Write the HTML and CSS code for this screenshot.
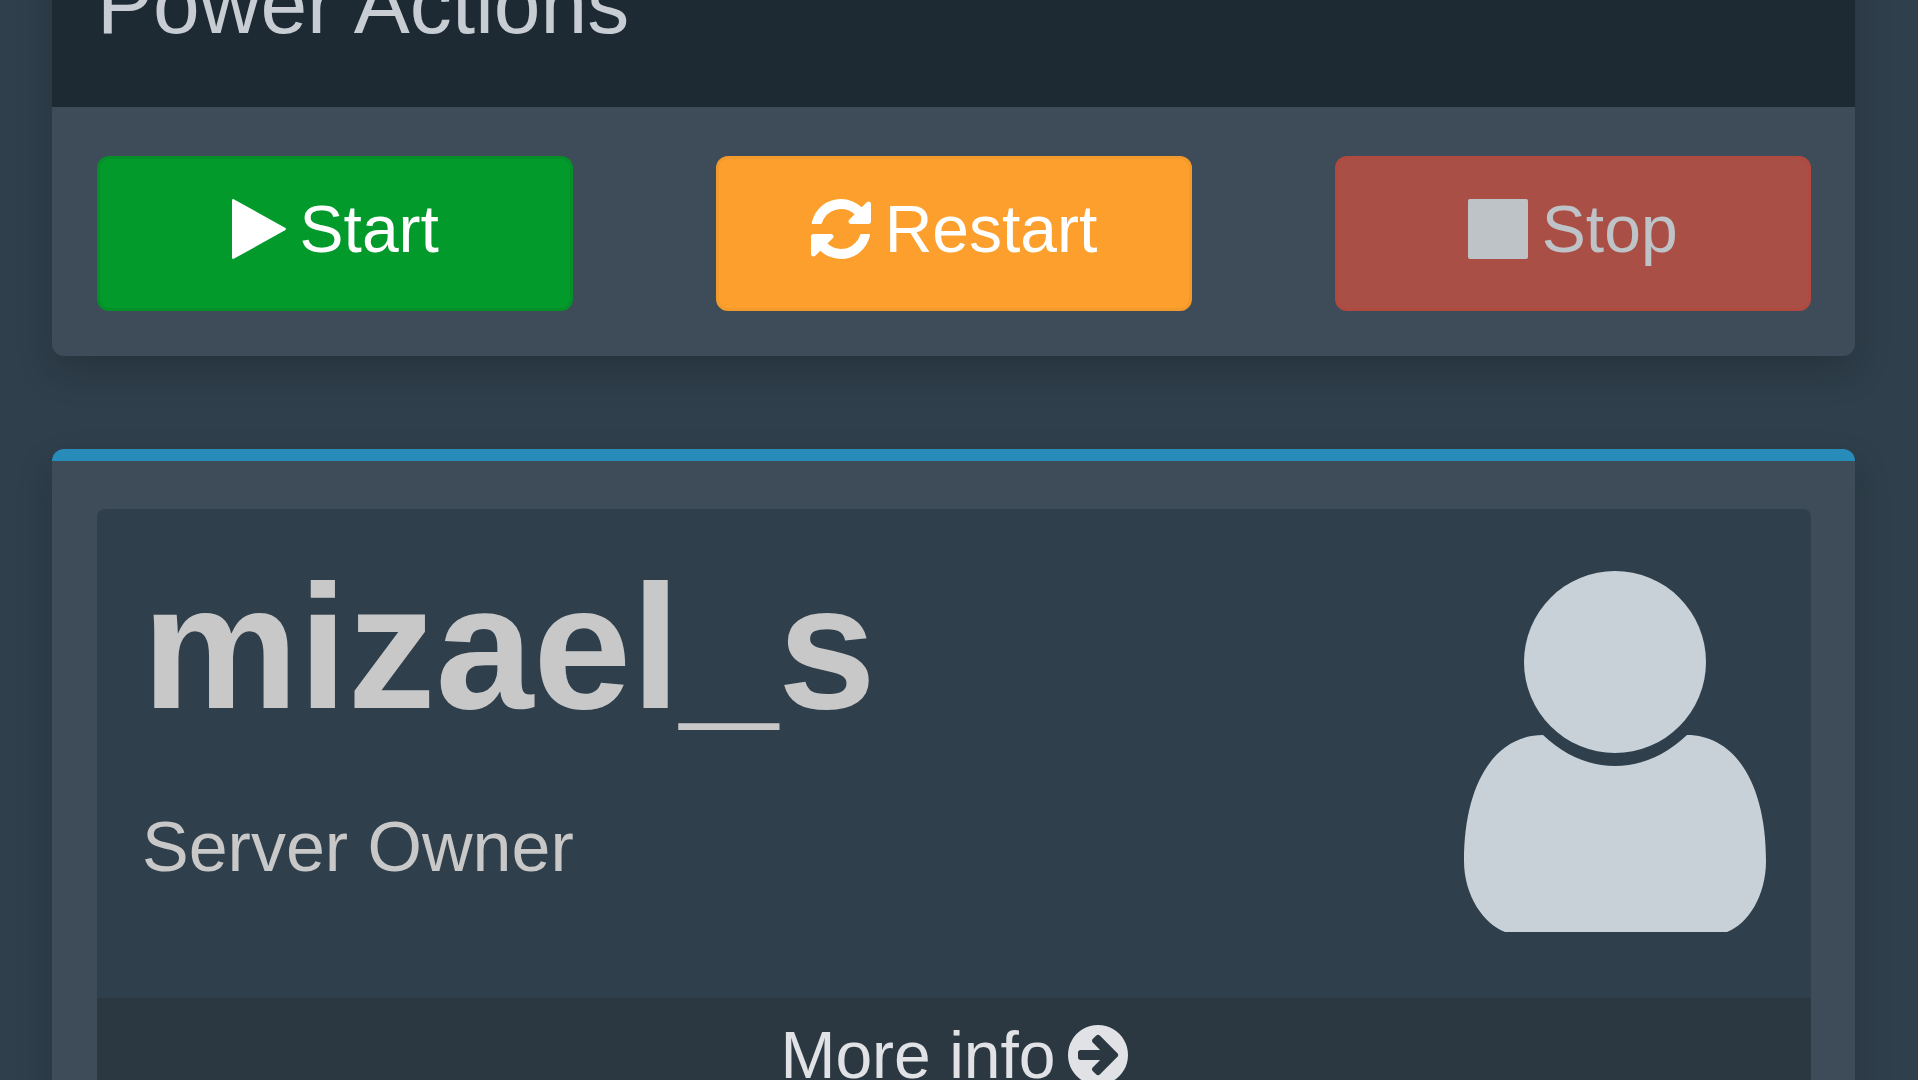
FILE: index.html
```html
<!DOCTYPE html>
<html lang="en">
<head>
  <meta charset="UTF-8">
  <meta name="viewport" content="width=device-width, initial-scale=1">
  <title>Power Actions</title>
  <link rel="stylesheet" href="styles.css">
</head>
<body>
  <main class="content">
    <!-- Power actions -->
    <section class="box">
      <header class="box-header">
        <h2>Power Actions</h2>
      </header>
      <div class="box-body actions">
        <button type="button" class="btn btn-start">
          <svg class="icon-play" viewBox="0 0 54 60" aria-hidden="true"><path d="M0 1.5Q0-.8 2.200.4L53 28.8Q55 30 53 31.200L2.200 59.600Q0 60.800 0 58.500z"/></svg>
          <span>Start</span>
        </button>
        <button type="button" class="btn btn-restart">
          <svg class="icon" viewBox="0 128 1536 1536" aria-hidden="true"><path d="M1511 1056q0 5-1 7-64 268-268 434.500t-478 166.500q-146 0-282.500-55t-243.500-157l-129 129q-19 19-45 19t-45-19-19-45v-448q0-26 19-45t45-19h448q26 0 45 19t19 45-19 45l-137 137q71 66 161 102t187 36q134 0 250-65t186-179q11-17 53-117 8-23 30-23h192q13 0 22.500 9.500t9.500 22.500zm25-800v448q0 26-19 45t-45 19h-448q-26 0-45-19t-19-45 19-45l138-138q-148-137-349-137-134 0-250 65t-186 179q-11 17-53 117-8 23-30 23h-199q-13 0-22.500-9.500t-9.500-22.500v-7q65-268 270-434.500t480-166.500q146 0 284 55.500t245 156.500l130-129q19-19 45-19t45 19 19 45z"/></svg>
          <span>Restart</span>
        </button>
        <button type="button" class="btn btn-stop" disabled>
          <svg class="icon" viewBox="0 0 60 60" aria-hidden="true"><rect width="60" height="60" rx="2"/></svg>
          <span>Stop</span>
        </button>
      </div>
    </section>

    <!-- Server owner -->
    <section class="box box-primary">
      <div class="small-box">
        <div class="inner">
          <div class="owner">
            <h3>mizael_s</h3>
            <p>Server Owner</p>
          </div>
          <svg class="icon-user" viewBox="0 0 302 362" aria-hidden="true">
            <circle cx="151" cy="92" r="91"/>
            <path d="M79 165C101 186 126 196 151 196S201 186 223 165C270 165 302 212 302 291C302 326 284 354 263 362H41C20 354 0 326 0 291C0 212 32 165 79 165z"/>
          </svg>
        </div>
        <a href="#" class="small-box-footer">
          <span>More info</span>
          <svg class="icon" viewBox="0 128 1536 1536" aria-hidden="true"><path d="M1285 896q0-27-18-45l-91-91-362-362q-18-18-45-18t-45 18l-91 91q-18 18-18 45t18 45l189 189h-502q-26 0-45 19t-19 45v128q0 26 19 45t45 19h502l-189 189q-19 19-19 45t19 45l91 91q18 18 45 18t45-18l362-362 91-91q18-18 18-45zm251 0q0 209-103 385.500t-279.500 279.500-385.500 103-385.500-103-279.500-279.500-103-385.500 103-385.500 279.500-279.500 385.500-103 385.500 103 279.500 279.500 103 385.500z"/></svg>
        </a>
      </div>
    </section>
  </main>
</body>
</html>
```
FILE: styles.css
```css
* {
  box-sizing: border-box;
}

body {
  margin: 0;
  background: #2f3f4b;
  color: #c8c8c8;
  font-family: "Liberation Sans", Arial, sans-serif;
  overflow: hidden;
}

h2, h3, p {
  margin: 0;
  font-weight: normal;
}

svg {
  display: block;
  flex: none;
  fill: currentColor;
}

/* The panel is scrolled a little past its top */
.content {
  margin-top: -83px;
  padding: 0 63px 0 52px;
}

/* Boxes */
.box {
  margin-bottom: 93px;
  border-radius: 12px;
  background: #3d4c58;
  box-shadow: 0 16px 36px rgba(0, 0, 0, 0.18);
}

.box-primary {
  padding: 48px 44px 45px 45px;
  border-top: 12px solid #278cba;
}

.box-header {
  padding: 45px 45px 61px;
  border-radius: 12px 12px 0 0;
  background: #1e2a33;
  color: #c8cdd4;
}

.box-header h2 {
  font-size: 84px;
  line-height: 84px;
}

.box-body {
  padding: 49px 44px 45px 45px;
}

/* Buttons */
.actions {
  display: flex;
  justify-content: space-between;
}

.btn {
  display: flex;
  align-items: center;
  justify-content: center;
  gap: 14px;
  width: 27.8%;
  height: 155px;
  padding: 0 0 10px;
  border: 3px solid;
  border-radius: 12px;
  color: #fff;
  font-family: inherit;
  font-size: 66px;
  line-height: 66px;
}

.btn-start {
  border-color: #058f29;
  background: #019a2b;
}

.btn-restart {
  border-color: #f29a2c;
  background: #fc9f2c;
}

.btn-stop {
  border-color: #b04a40;
  background: #aa4f46;
  color: #bec3c8;
}

.icon {
  width: 60px;
  height: 60px;
}

.icon-play {
  width: 54px;
  height: 60px;
}

/* Owner card */
.small-box {
  border-radius: 8px;
  background: #2f3f4b;
  overflow: hidden;
}

.inner {
  display: flex;
  justify-content: space-between;
  padding: 49px 45px 66px;
}

.owner h3 {
  margin-bottom: 76px;
  font-size: 176px;
  font-weight: bold;
  line-height: 178px;
}

.owner p {
  font-size: 70px;
  line-height: 70px;
}

.icon-user {
  width: 302px;
  height: 362px;
  margin-top: 12px;
  fill: #c9d1d8;
}

.small-box-footer {
  display: flex;
  align-items: center;
  justify-content: center;
  gap: 12px;
  padding: 24px;
  background: #2b3842;
  color: #e0e2e5;
  font-size: 66px;
  line-height: 66px;
  text-decoration: none;
}
```
